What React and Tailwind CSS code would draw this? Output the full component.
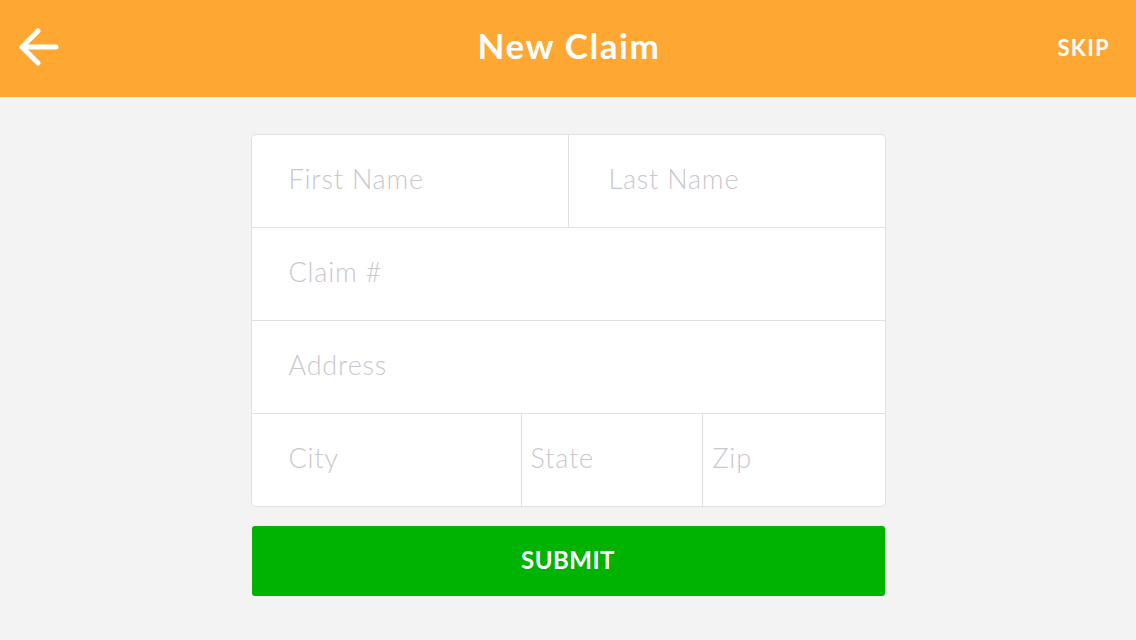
export default function App() {
  const font = { fontFamily: 'Lato, "Open Sans", sans-serif' };
  return (
    <div className="w-[1136px] h-[640px] bg-[#f3f3f3] flex flex-col" style={font}>
      <header className="h-[97px] bg-[#ffa733] flex items-center justify-between px-[19px] pb-[3px] relative">
        <svg width="40" height="40" viewBox="0 0 40 40" className="ml-0 mt-[-1px]">
          <path d="M3 20 H37 M3 20 L19 4 M3 20 L19 36" stroke="white" strokeWidth="5" fill="none" strokeLinecap="round" strokeLinejoin="round" />
        </svg>
        <h1 className="absolute left-1/2 top-[20px] -translate-x-1/2 text-white font-bold text-[35px] leading-[50px] tracking-[1.6px] pl-[2px]">New Claim</h1>
        <span className="text-white font-bold text-[22px] tracking-[1.3px] mr-[7px] mt-[0px]">SKIP</span>
      </header>
      <main className="flex flex-col items-center pt-[37px]">
        <div className="w-[635px] bg-white border border-[#dfe1e5] rounded-[5px] flex flex-col text-[27px] tracking-[0.8px] text-[#c8c8cd] font-light">
          <div className="flex h-[93px] border-b border-[#dfe1e5]">
            <div className="w-[317px] border-r border-[#dfe1e5] flex items-center pl-[37px] pb-[4px]">First Name</div>
            <div className="flex-1 flex items-center pl-[40px] pb-[4px]">Last Name</div>
          </div>
          <div className="flex h-[93px] border-b border-[#dfe1e5] items-center pl-[37px] pb-[4px]">Claim #</div>
          <div className="flex h-[93px] border-b border-[#dfe1e5] items-center pl-[37px] pb-[4px]">Address</div>
          <div className="flex h-[92px]">
            <div className="w-[270px] border-r border-[#dfe1e5] flex items-center pl-[37px] pb-[4px]">City</div>
            <div className="w-[181px] border-r border-[#dfe1e5] flex items-center pl-[9px] pb-[4px]">State</div>
            <div className="flex-1 flex items-center pl-[10px] pb-[4px]">Zip</div>
          </div>
        </div>
        <button className="mt-[19px] w-[633px] h-[70px] bg-[#00b300] rounded-[3px] text-white font-bold text-[24px] tracking-[0.5px] pb-[2px]">SUBMIT</button>
      </main>
    </div>
  );
}
